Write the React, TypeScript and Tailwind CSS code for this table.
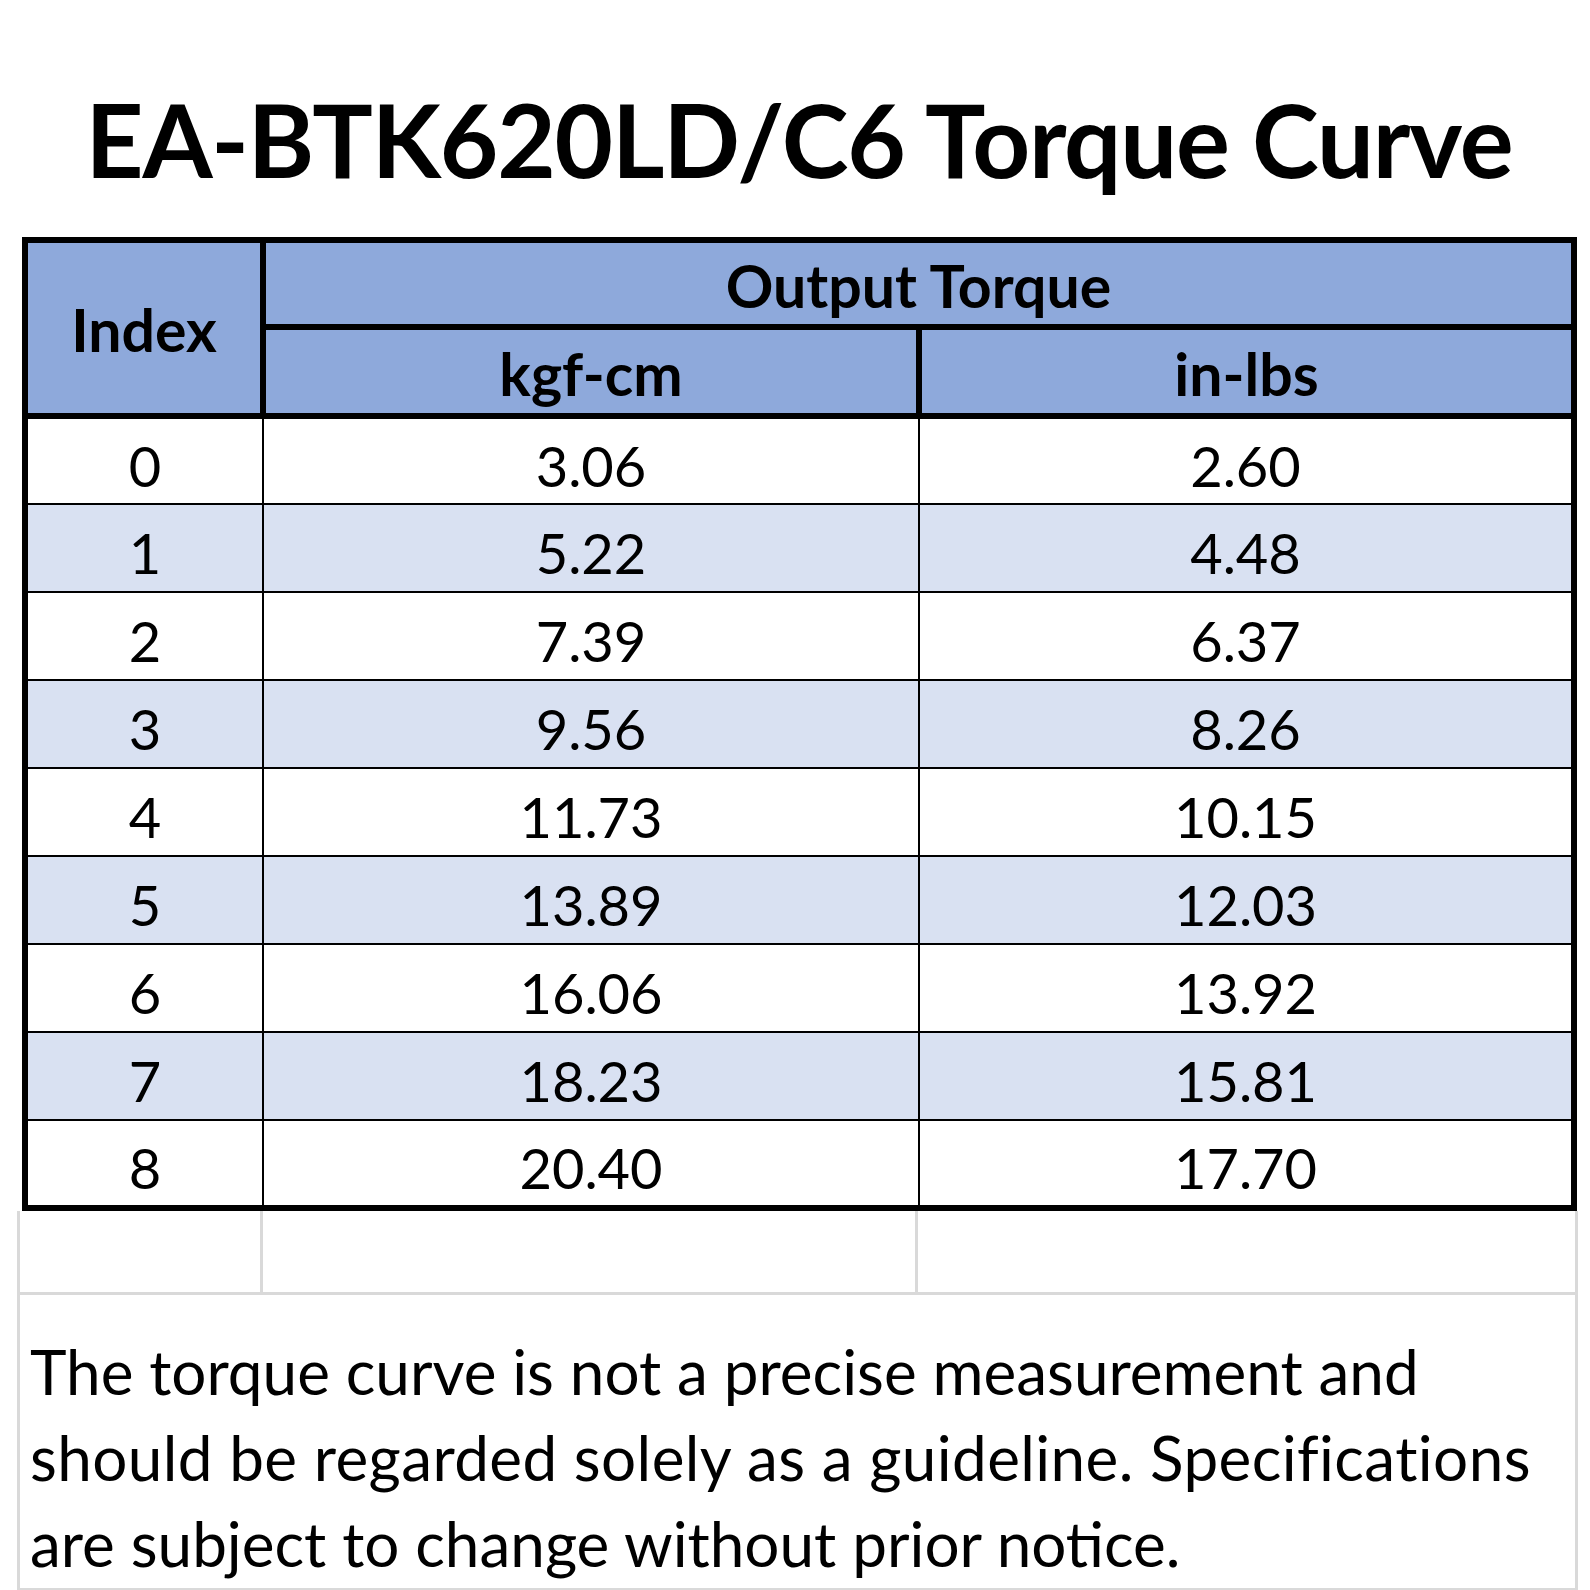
const rows: [string, string, string][] = [
  ["0", "3.06", "2.60"],
  ["1", "5.22", "4.48"],
  ["2", "7.39", "6.37"],
  ["3", "9.56", "8.26"],
  ["4", "11.73", "10.15"],
  ["5", "13.89", "12.03"],
  ["6", "16.06", "13.92"],
  ["7", "18.23", "15.81"],
  ["8", "20.40", "17.70"],
];

export default function App() {
  return (
    <div className="w-[1590px] h-[1590px] bg-white text-black font-['Lato',sans-serif] overflow-hidden">
      <h1 className="pt-[89px] pl-[8px] text-center text-[101px] leading-none font-bold tracking-[-1.2px]">
        EA-BTK620LD/C6 Torque Curve
      </h1>

      <div className="mt-[47px] pl-[22px]">
        <table className="w-[1549px] border-collapse table-fixed border-[6px] border-black">
          <colgroup>
            <col className="w-[238px]" />
            <col className="w-[656px]" />
            <col className="w-[655px]" />
          </colgroup>
          <thead className="bg-[#8ea9db]">
            <tr className="h-[87px]">
              <th
                rowSpan={2}
                className="border-[6px] border-black p-0 pt-[4px] text-[59px] leading-[64px] font-bold text-center align-middle"
              >
                Index
              </th>
              <th
                colSpan={2}
                className="border-[6px] border-black p-0 pt-[4px] text-[59px] leading-[64px] font-bold text-center align-middle"
              >
                Output Torque
              </th>
            </tr>
            <tr className="h-[89px]">
              <th className="border-[6px] border-black p-0 pt-[4px] text-[59px] leading-[64px] font-bold text-center align-middle">
                kgf-cm
              </th>
              <th className="border-[6px] border-black p-0 pt-[4px] text-[59px] leading-[64px] font-bold text-center align-middle">
                in-lbs
              </th>
            </tr>
          </thead>
          <tbody>
            {rows.map(([idx, kgf, lbs], i) => (
              <tr
                key={idx}
                className={`h-[88px] ${i % 2 === 1 ? "bg-[#d9e1f2]" : "bg-white"}`}
              >
                <td className="border-2 border-black p-0 pt-[10px] text-center text-[56px] leading-[60px] align-middle">
                  {idx}
                </td>
                <td className="border-2 border-black p-0 pt-[10px] text-center text-[56px] leading-[60px] align-middle">
                  {kgf}
                </td>
                <td className="border-2 border-black p-0 pt-[10px] text-center text-[56px] leading-[60px] align-middle">
                  {lbs}
                </td>
              </tr>
            ))}
          </tbody>
        </table>
      </div>

      {/* leftover sheet grid under the table */}
      <div className="ml-[17px] w-[1561px] border-x-[3px] border-[#d9d9d9]">
        <div className="grid grid-cols-[243px_655px_1fr] h-[84px] border-b-[3px] border-[#d9d9d9]">
          <div className="border-r-[3px] border-[#d9d9d9]" />
          <div className="border-r-[3px] border-[#d9d9d9]" />
          <div />
        </div>
        <div className="h-[296px] pt-[33px] pl-[10px] text-[62px] leading-[86px] border-b-[3px] border-[#d9d9d9]">
          <p className="whitespace-nowrap">The torque curve is not a precise measurement and</p>
          <p className="whitespace-nowrap tracking-[0.4px]">
            should be regarded solely as a guideline. Specifications
          </p>
          <p className="whitespace-nowrap">are subject to change without prior notice.</p>
        </div>
      </div>
    </div>
  );
}
